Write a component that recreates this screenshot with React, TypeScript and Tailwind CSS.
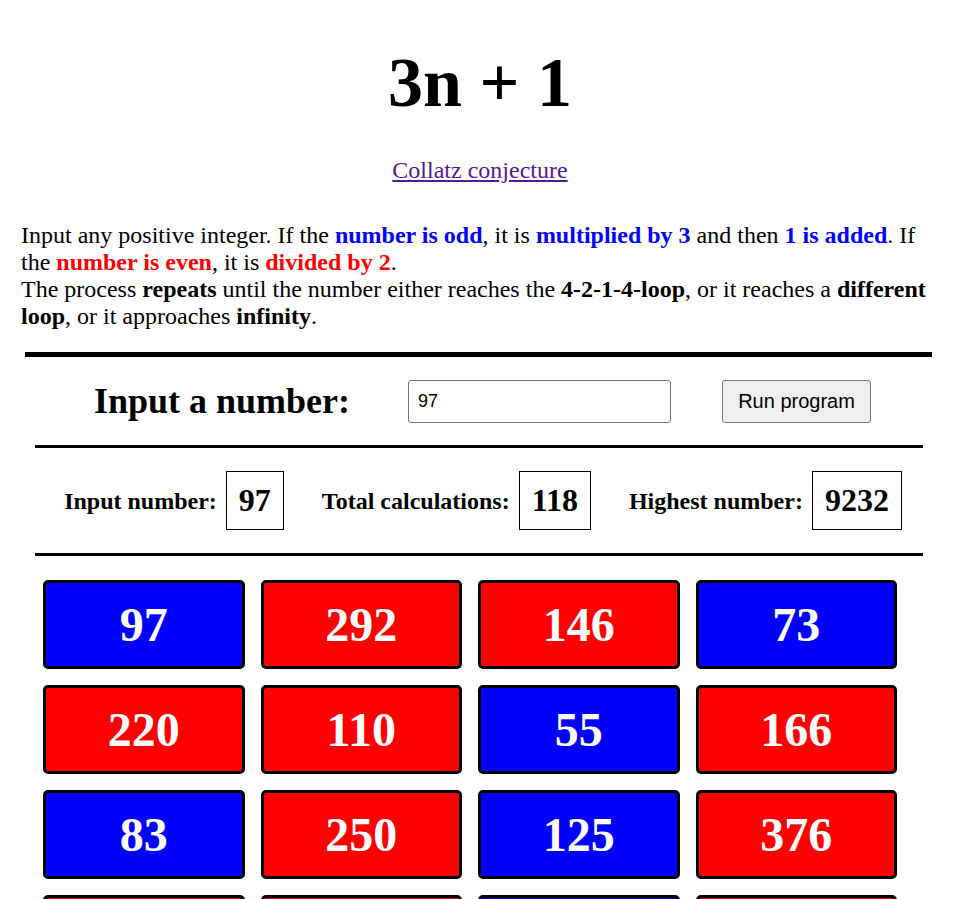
import { useState } from "react";

function collatz(start: number) {
  const seq: number[] = [start];
  let n = start;
  while (n !== 1 && seq.length < 1000) {
    n = n % 2 === 0 ? n / 2 : 3 * n + 1;
    seq.push(n);
  }
  return seq;
}

export default function App() {
  const [value, setValue] = useState("97");
  const [start, setStart] = useState(97);
  const seq = collatz(start);

  return (
    <main className="min-h-screen bg-white text-black font-['Liberation_Serif',serif]">
      <h1 className="pt-[43px] text-center text-[70px] font-bold leading-[80px]">3n + 1</h1>
      <div className="mt-[33px] text-center text-[24px] leading-[28px]">
        <a href="#" className="text-[#551a8b] underline">
          Collatz conjecture
        </a>
      </div>

      <p className="mx-[21px] mt-[38px] text-[24px] leading-[27px]">
        Input any positive integer. If the <b className="text-[#0000ff]">number is odd</b>, it is{" "}
        <b className="text-[#0000ff]">multiplied by 3</b> and then <b className="text-[#0000ff]">1 is added</b>. If
        the <b className="text-[#ff0000]">number is even</b>, it is <b className="text-[#ff0000]">divided by 2</b>.
        <br />
        The process <b>repeats</b> until the number either reaches the <b>4-2-1-4-loop</b>, or it reaches a{" "}
        <b>different loop</b>, or it approaches <b>infinity</b>.
      </p>

      <div className="mx-[25px] mt-[22px] w-[907px] border-t-[5px] border-black" />

      <div className="mx-[35px] w-[888px]">
        <div className="flex h-[88px] items-center">
          <h2 className="ml-[59px] w-[254px] whitespace-nowrap text-[36px] font-bold">Input a number:</h2>
          <input
            value={value}
            onChange={(e) => setValue(e.target.value)}
            className="ml-[60px] h-[43px] w-[263px] rounded-[3px] border border-[#767676] px-[9px] font-['Liberation_Sans',sans-serif] text-[18px]"
          />
          <button
            onClick={() => {
              const n = parseInt(value);
              if (n > 0) setStart(n);
            }}
            className="ml-[51px] h-[43px] w-[149px] rounded-[3px] border border-[#767676] bg-[#efefef] font-['Liberation_Sans',sans-serif] text-[20px]"
          >
            Run program
          </button>
        </div>

        <div className="border-t-[3px] border-black" />

        <div className="flex h-[105px] items-center justify-center gap-[38px] pl-[8px]">
          {[
            ["Input number:", start],
            ["Total calculations:", seq.length - 1],
            ["Highest number:", Math.max(...seq)],
          ].map(([label, num]) => (
            <div key={label as string} className="flex items-center gap-[9px]">
              <span className="text-[24px] font-bold">{label}</span>
              <span className="border border-black px-[12px] py-[8px] text-[32px] font-bold leading-[41px]">
                {num}
              </span>
            </div>
          ))}
        </div>

        <div className="border-t-[3px] border-black" />

        <div className="flex flex-wrap pt-[16px]">
          {seq.map((n, i) => (
            <div
              key={i}
              className={`m-2 flex h-[89px] w-[201.5px] items-center justify-center rounded-[5px] border-[3px] border-black text-[48px] font-bold text-white ${
                n % 2 === 0 ? "bg-[#ff0000]" : "bg-[#0000ff]"
              }`}
            >
              {n}
            </div>
          ))}
        </div>
      </div>
    </main>
  );
}
